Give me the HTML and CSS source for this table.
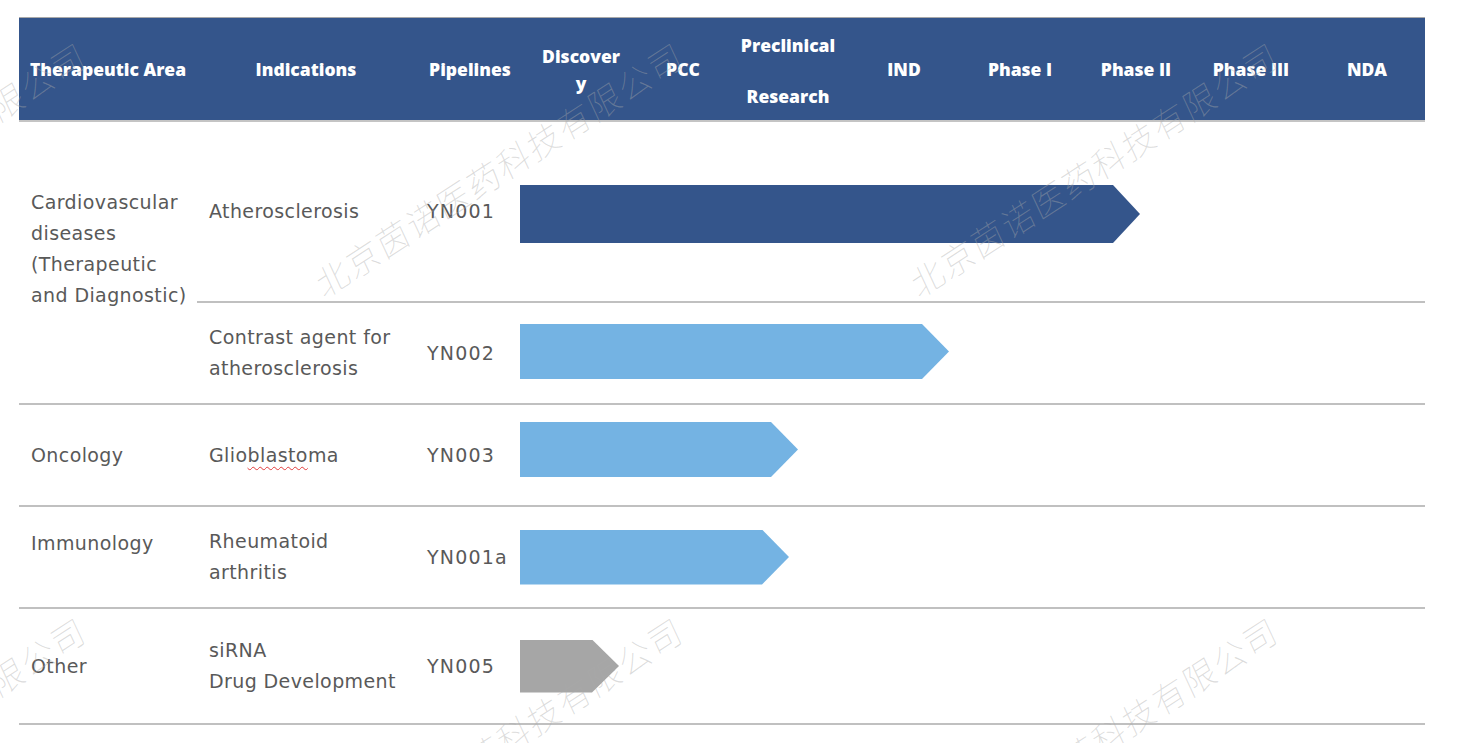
FILE: index.html
```html
<!DOCTYPE html>
<html lang="en">
<head>
<meta charset="utf-8">
<title>Pipeline</title>
<link rel="stylesheet" href="styles.css">
</head>
<body>
<div class="page">
  <div class="table">
    <div class="head">
      <div class="hcell">Therapeutic Area</div>
      <div class="hcell">Indications</div>
      <div class="hcell">Pipelines</div>
      <div class="hcell hcell-tight">Discover<br>y</div>
      <div class="hcell">PCC</div>
      <div class="hcell hcell-split"><span>Preclinical</span><span>Research</span></div>
      <div class="hcell">IND</div>
      <div class="hcell">Phase I</div>
      <div class="hcell">Phase II</div>
      <div class="hcell">Phase III</div>
      <div class="hcell">NDA</div>
    </div>
    <div class="body">
      <div class="cell area area-cardio"><p>Cardiovascular<br>diseases<br>(Therapeutic<br>and Diagnostic)</p></div>
      <div class="cell"><p>Atherosclerosis</p></div>
      <div class="cell"><p class="code">YN001</p></div>
      <div class="cell track track-1"><div class="arrow arrow-dark" style="width:620px"></div></div>

      <div class="cell"><p>Contrast agent for<br>atherosclerosis</p></div>
      <div class="cell"><p class="code">YN002</p></div>
      <div class="cell track track-2"><div class="arrow arrow-light" style="width:429px"></div></div>

      <div class="cell area"><p>Oncology</p></div>
      <div class="cell"><p>Glio<span class="spell">blasto</span>ma</p></div>
      <div class="cell"><p class="code">YN003</p></div>
      <div class="cell track track-3"><div class="arrow arrow-light" style="width:278px"></div></div>

      <div class="cell area area-top"><p>Immunology</p></div>
      <div class="cell"><p>Rheumatoid<br>arthritis</p></div>
      <div class="cell"><p class="code">YN001a</p></div>
      <div class="cell track"><div class="arrow arrow-light" style="width:269px"></div></div>

      <div class="cell area"><p>Other</p></div>
      <div class="cell"><p>siRNA<br>Drug Development</p></div>
      <div class="cell"><p class="code">YN005</p></div>
      <div class="cell track"><div class="arrow arrow-gray" style="width:99px"></div></div>
    </div>
  </div>

  <div class="watermarks" aria-hidden="true">
    <span class="wm wm-a">北京茵诺医药科技有限公司</span>
    <span class="wm wm-b">北京茵诺医药科技有限公司</span>
    <span class="wm wm-c">北京茵诺医药科技有限公司</span>
    <span class="wm wm-d">北京茵诺医药科技有限公司</span>
    <span class="wm wm-e">北京茵诺医药科技有限公司</span>
    <span class="wm wm-f">北京茵诺医药科技有限公司</span>
  </div>
</div>
</body>
</html>
```

FILE: styles.css
```css
* { box-sizing: border-box; }

html, body {
  margin: 0;
  padding: 0;
  background: #ffffff;
}

.page {
  position: relative;
  width: 1458px;
  height: 743px;
  overflow: hidden;
  padding: 17px 0 0 19px;
}

.table {
  width: 1406px;
}

.head {
  display: grid;
  grid-template-columns: 178px 218px 110px 112px 92px 118px 114px 118px 114px 116px 116px;
  height: 105px;
  background: #34558b;
  border-top: 1px solid #a9a9a9;
  border-bottom: 2px solid #c4c4c4;
  font-family: "Open Sans", "Liberation Sans", sans-serif;
  font-weight: 800;
  font-size: 17.5px;
  color: #ffffff;
}

.hcell {
  display: flex;
  align-items: center;
  justify-content: center;
  text-align: center;
  line-height: 27px;
  white-space: nowrap;
}

.hcell-tight {
  padding-top: 2px;
}

.hcell-split {
  flex-direction: column;
  gap: 24px;
  padding-top: 4px;
}

.body {
  display: grid;
  grid-template-columns: 178px 218px 105px 905px;
  grid-template-rows: 181px 102px 102px 102px 116px;
  font-family: "DejaVu Sans", "Liberation Sans", sans-serif;
  font-size: 19px;
  letter-spacing: 0.4px;
  color: #595959;
}

.cell {
  display: flex;
  align-items: center;
  padding-left: 12px;
  border-bottom: 2px solid #c0c0c0;
}

.cell p {
  margin: 0;
  line-height: 31px;
  white-space: nowrap;
}

.cell .code {
  letter-spacing: 1.2px;
}

.area-cardio {
  grid-row: span 2;
  align-items: flex-start;
  padding-top: 65px;
}

.area-top {
  align-items: flex-start;
  padding-top: 21px;
}

.track {
  padding-left: 0;
}

.track-1 { padding-top: 5px; }
.track-2 { padding-bottom: 3px; }
.track-3 { padding-bottom: 11px; }

.arrow {
  height: 55px;
  clip-path: polygon(0 0, calc(100% - 27px) 0, 100% 50%, calc(100% - 27px) 100%, 0 100%);
}

.arrow-dark {
  height: 58px;
  background: #34558b;
}

.arrow-light {
  background: #74b3e3;
}

.arrow-gray {
  height: 53px;
  background: #a6a6a6;
}

.spell {
  text-decoration: underline wavy #e23b3b;
  text-decoration-thickness: 1px;
  text-underline-offset: 4px;
}

.watermarks {
  position: absolute;
  inset: 0;
  pointer-events: none;
  overflow: hidden;
}

.wm {
  position: absolute;
  font-family: "Noto Sans CJK SC", sans-serif;
  font-weight: 100;
  font-size: 34px;
  line-height: 34px;
  letter-spacing: 2px;
  white-space: nowrap;
  color: rgba(170, 170, 170, 0.42);
  transform-origin: 0 100%;
  transform: rotate(-33deg) skewX(-8deg);
}

.wm-a { left: 325px; top: 268px; }
.wm-b { left: 920px; top: 268px; }
.wm-c { left: -272px; top: 268px; }
.wm-d { left: 325px; top: 843px; }
.wm-e { left: 920px; top: 843px; }
.wm-f { left: -272px; top: 843px; }
```
